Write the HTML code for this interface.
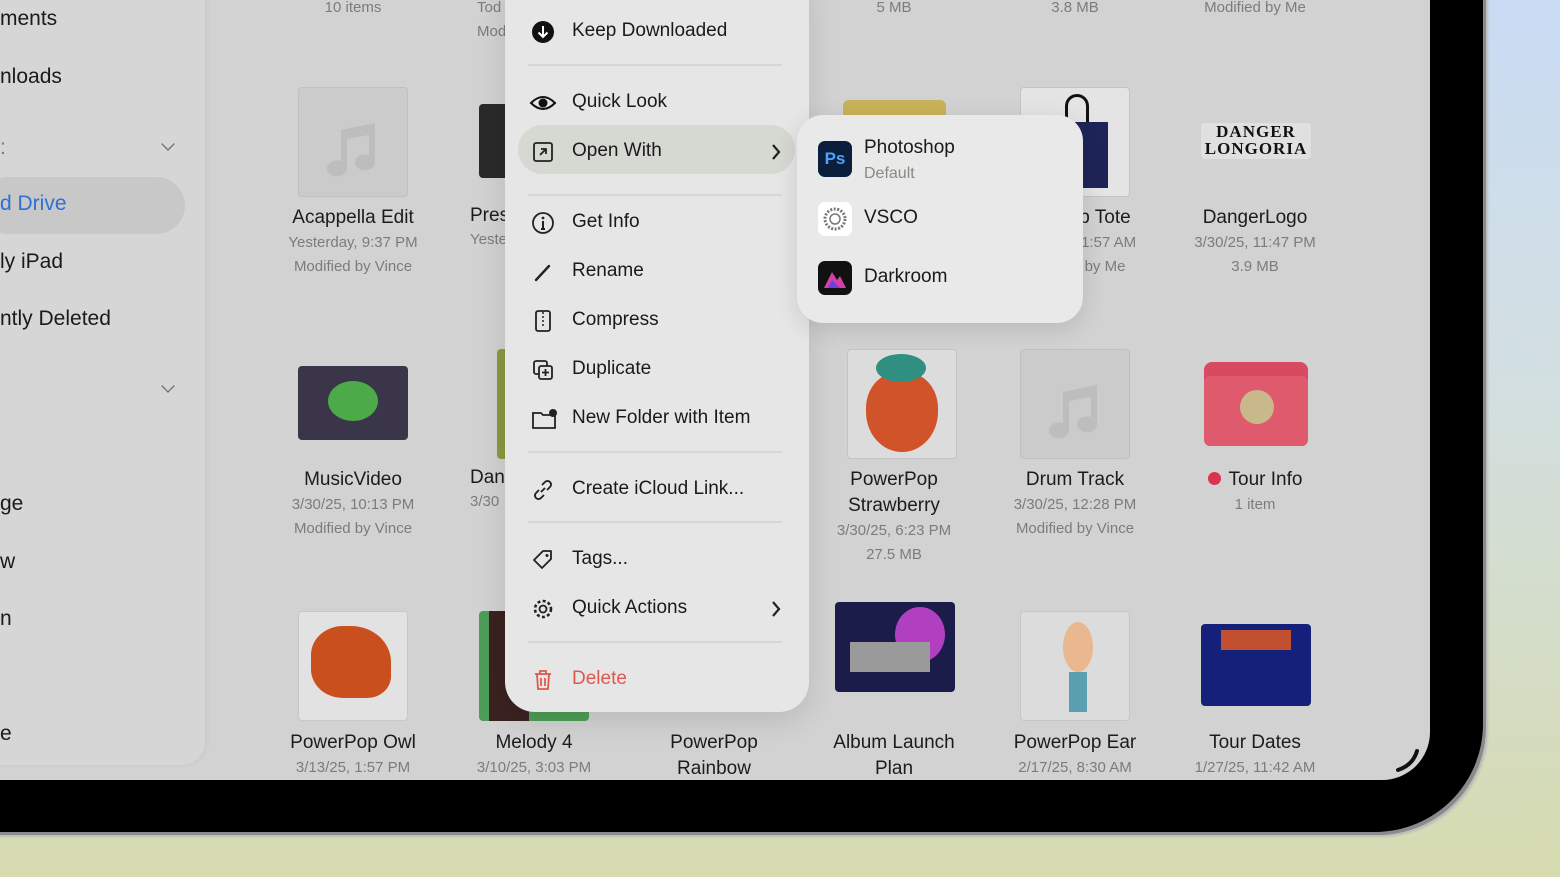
<!DOCTYPE html>
<html><head><meta charset="utf-8"><style>
*{margin:0;padding:0;box-sizing:border-box}
body{width:1560px;height:877px;overflow:hidden;position:relative;font-family:"Liberation Sans",sans-serif;background:linear-gradient(180deg,#c9dcf4 0%,#d3dfe0 45%,#d6dbb0 100%)}
.dev{position:absolute;left:-60px;top:-60px;width:1543px;height:892px;background:#000;border-radius:0 0 108px 0;box-shadow:3px 3px 0 #8a8a8a,5px 5px 2px #bbb}
.scr{position:absolute;left:0;top:0;width:1430px;height:780px;background:#d2d2d2;border-radius:0 0 48px 0;overflow:hidden}
.side{position:absolute;left:-20px;top:-20px;width:225px;height:785px;background:#d6d6d6;border-radius:0 0 24px 0;box-shadow:2px 0 6px rgba(0,0,0,.04)}
.st{position:absolute;left:0;font-size:21px;color:#1a1a1a;white-space:nowrap}
.chev{position:absolute;left:160px;width:16px;height:16px;border-right:2px solid #666;border-bottom:2px solid #666;transform:rotate(45deg) scale(.6)}
.th{position:absolute;width:110px;height:110px;border-radius:4px}
.nm{position:absolute;width:180px;text-align:center;font-size:19px;color:#1c1c1c;line-height:26px;margin-top:2px}
.mt{font-size:15px;color:#7c7c7c;line-height:24px}
.menu{position:absolute;left:505px;top:-33px;width:304px;height:742px;background:#e6e6e6;border-radius:30px;box-shadow:0 8px 30px rgba(0,0,0,.12)}
.mi{position:absolute;left:572px;font-size:19px;color:#1a1a1a;white-space:nowrap}
.ic{position:absolute;left:531px;width:24px;height:24px}
.sep{position:absolute;left:528px;width:254px;height:2px;background:#d7d7d7}
.sub{position:absolute;left:797px;top:112px;width:286px;height:208px;background:#e9e9e9;border-radius:26px;box-shadow:0 6px 24px rgba(0,0,0,.12)}
.note{fill:#bdbdbd}
.grp{position:absolute;left:0;top:3px;width:1430px;height:780px}
</style></head><body>
<div class="dev"></div>
<div class="scr">
 <div class="side"></div>
 <div class="st" style="top:7px">ments</div>
 <div class="st" style="top:65px">nloads</div>
 <div class="st" style="top:136px;color:#777">:</div>
 <div class="chev" style="top:136px"></div>
 <div style="position:absolute;left:-20px;top:177px;width:205px;height:57px;background:#c8c8c8;border-radius:29px"></div>
 <div class="st" style="top:192px;color:#2f6fd6">d Drive</div>
 <div class="st" style="top:250px">ly iPad</div>
 <div class="st" style="top:307px">ntly Deleted</div>
 <div class="chev" style="top:378px"></div>
 <div class="st" style="top:492px">ge</div>
 <div class="st" style="top:550px">w</div>
 <div class="st" style="top:607px">n</div>
 <div class="st" style="top:722px">e</div>

 <div class="nm mt" style="left:263px;top:-6px">10 items</div>
 <div class="nm mt" style="left:804px;top:-6px">5 MB</div>
 <div class="nm mt" style="left:985px;top:-6px">3.8 MB</div>
 <div class="nm mt" style="left:1165px;top:-6px">Modified by Me</div>
 <div class="mt" style="position:absolute;left:477px;top:-4px">Tod</div>
 <div class="mt" style="position:absolute;left:477px;top:20px">Mod</div>

 <div class="th" style="left:298px;top:87px;background:#cbcbcb;border:1px solid #c0c0c0"><svg width="110" height="110"><path class="note" d="M42 42 L76 35 V74 a10 8 0 1 1 -6 -7 V47 L48 51 V80 a10 8 0 1 1 -6 -7 Z"/></svg></div>
 <div class="nm" style="left:263px;top:203px">Acappella Edit<div class="mt">Yesterday, 9:37 PM<br>Modified by Vince</div></div>
 <div class="th" style="left:479px;top:104px;width:30px;height:74px;background:#2a2a2a"></div>
 <div style="position:absolute;left:470px;top:205px;font-size:19px;color:#1c1c1c">Pres<div class="mt" style="margin-top:1px">Yeste</div></div>
 <div class="th" style="left:843px;top:100px;width:103px;height:20px;background:#c9b257;border-radius:6px"></div>
 <div class="th" style="left:1020px;top:87px;background:#e4e4e4;border:1px solid #c4c4c4"><div style="position:absolute;left:44px;top:6px;width:24px;height:30px;border:3px solid #111;border-bottom:none;border-radius:12px 12px 0 0"></div><div style="position:absolute;left:35px;top:34px;width:52px;height:66px;background:#1f2458"></div></div>
 <div class="nm" style="left:985px;top:203px"><span style="margin-left:60px">p Tote</span><div class="mt" style="padding-left:60px">11:57 AM<br>by Me</div></div>
 <div class="th" style="left:1201px;top:123px;height:36px;background:#e0e0e0;font:bold 17px 'Liberation Serif',serif;color:#111;text-align:center;line-height:17px;letter-spacing:1px">DANGER<br>LONGORIA</div>
 <div class="nm" style="left:1165px;top:203px">DangerLogo<div class="mt">3/30/25, 11:47 PM<br>3.9 MB</div></div>

 <div class="th" style="left:298px;top:366px;height:74px;background:#3a3548"><div style="position:absolute;left:30px;top:15px;width:50px;height:40px;background:#4caa48;border-radius:50%"></div></div>
 <div class="nm" style="left:263px;top:465px">MusicVideo<div class="mt">3/30/25, 10:13 PM<br>Modified by Vince</div></div>
 <div class="th" style="left:497px;top:349px;width:12px;background:#8a9a40"></div>
 <div style="position:absolute;left:470px;top:467px;font-size:19px;color:#1c1c1c">Dan<div class="mt" style="margin-top:1px">3/30</div></div>
 <div class="th" style="left:847px;top:349px;background:#dcdcdc;border:1px solid #c4c4c4"><div style="position:absolute;left:18px;top:22px;width:72px;height:80px;background:#d0532a;border-radius:45% 45% 50% 50%"></div><div style="position:absolute;left:28px;top:4px;width:50px;height:28px;background:#2f8f80;border-radius:50%"></div></div>
 <div class="nm" style="left:804px;top:465px">PowerPop<br>Strawberry<div class="mt">3/30/25, 6:23 PM<br>27.5 MB</div></div>
 <div class="th" style="left:1020px;top:349px;background:#cbcbcb;border:1px solid #c0c0c0"><svg width="110" height="110"><path class="note" d="M42 42 L76 35 V74 a10 8 0 1 1 -6 -7 V47 L48 51 V80 a10 8 0 1 1 -6 -7 Z"/></svg></div>
 <div class="nm" style="left:985px;top:465px">Drum Track<div class="mt">3/30/25, 12:28 PM<br>Modified by Vince</div></div>
 <div class="th" style="left:1204px;top:362px;width:104px;height:84px;background:#d84a60;border-radius:8px"><div style="position:absolute;left:0;top:14px;width:104px;height:70px;background:#e05a6e;border-radius:6px"></div><div style="position:absolute;left:36px;top:28px;width:34px;height:34px;background:#c9b88a;border-radius:50%"></div></div>
 <div class="nm" style="left:1165px;top:465px"><span style="display:inline-block;width:13px;height:13px;border-radius:50%;background:#d8364e;margin-right:8px"></span>Tour Info<div class="mt">1 item</div></div>

 <div class="th" style="left:298px;top:611px;background:#e2e2e2;border:1px solid #c8c8c8"><div style="position:absolute;left:12px;top:14px;width:80px;height:72px;background:#c9501e;border-radius:40% 50% 30% 40%"></div></div>
 <div class="nm" style="left:263px;top:728px">PowerPop Owl<div class="mt">3/13/25, 1:57 PM</div></div>
 <div class="th" style="left:479px;top:611px;background:#4d9d58"><div style="position:absolute;left:10px;top:0;width:40px;height:110px;background:#3a2220"></div></div>
 <div class="nm" style="left:444px;top:728px">Melody 4<div class="mt">3/10/25, 3:03 PM</div></div>
 <div class="nm" style="left:624px;top:728px">PowerPop<br>Rainbow</div>
 <div class="th" style="left:835px;top:602px;width:120px;height:90px;background:#1c1c4a"><div style="position:absolute;left:60px;top:5px;width:50px;height:55px;background:#b040c0;border-radius:50%"></div><div style="position:absolute;left:15px;top:40px;width:80px;height:30px;background:#9a9a9a"></div></div>
 <div class="nm" style="left:804px;top:728px">Album Launch<br>Plan</div>
 <div class="th" style="left:1020px;top:611px;background:#dcdcdc;border:1px solid #c6c6c6"><div style="position:absolute;left:42px;top:10px;width:30px;height:50px;background:#e9b890;border-radius:50%"></div><div style="position:absolute;left:48px;top:60px;width:18px;height:40px;background:#5aa0b0"></div></div>
 <div class="nm" style="left:985px;top:728px">PowerPop Ear<div class="mt">2/17/25, 8:30 AM</div></div>
 <div class="th" style="left:1201px;top:624px;height:82px;background:#14207a"><div style="position:absolute;left:20px;top:6px;width:70px;height:20px;background:#c05030"></div></div>
 <div class="nm" style="left:1165px;top:728px">Tour Dates<div class="mt">1/27/25, 11:42 AM</div></div>
 <svg style="position:absolute;left:1395px;top:745px" width="30" height="30"><path d="M3 25 Q18 20 22 6" stroke="#111" stroke-width="4" fill="none" stroke-linecap="round"/></svg>

 <div class="grp">
 <div class="menu"></div>
 <div style="position:absolute;left:518px;top:122px;width:277px;height:49px;border-radius:25px;background:#d6d8d2"></div>
 <svg class="ic" style="top:17px"><circle cx="12" cy="12" r="11" fill="#111"/><path d="M12 6v11M7.5 12.5 12 17l4.5-4.5" stroke="#fff" stroke-width="2" fill="none"/></svg>
 <div class="mi" style="top:17px">Keep Downloaded</div>
 <div class="sep" style="top:61px"></div>
 <svg class="ic" style="top:88px;left:529px;width:28px"><path d="M2 12Q14 0 26 12Q14 24 2 12Z" stroke="#111" stroke-width="2" fill="none"/><circle cx="14" cy="12" r="4.5" fill="#111"/></svg>
 <div class="mi" style="top:88px">Quick Look</div>
 <svg class="ic" style="top:137px"><rect x="3" y="3" width="18" height="18" rx="2" stroke="#222" stroke-width="1.8" fill="none"/><path d="M9 15l6-6M10 9h5v5" stroke="#222" stroke-width="1.8" fill="none"/></svg>
 <div class="mi" style="top:137px">Open With</div>
 <svg style="position:absolute;left:770px;top:140px" width="12" height="18"><path d="M3 2l6 7-6 7" stroke="#222" stroke-width="2.2" fill="none"/></svg>
 <div class="sep" style="top:191px"></div>
 <svg class="ic" style="top:208px"><circle cx="12" cy="12" r="10" stroke="#222" stroke-width="1.8" fill="none"/><path d="M12 10v8M10 18h4" stroke="#222" stroke-width="2" fill="none"/><circle cx="12" cy="7" r="1.4" fill="#222"/></svg>
 <div class="mi" style="top:208px">Get Info</div>
 <svg class="ic" style="top:257px"><path d="M5 20L18 6" stroke="#222" stroke-width="2.4" fill="none" stroke-linecap="round"/></svg>
 <div class="mi" style="top:257px">Rename</div>
 <svg class="ic" style="top:306px"><rect x="5" y="2" width="14" height="20" rx="2" stroke="#222" stroke-width="1.8" fill="none"/><path d="M12 3v16" stroke="#222" stroke-width="1.5" stroke-dasharray="2 2"/></svg>
 <div class="mi" style="top:306px">Compress</div>
 <svg class="ic" style="top:355px"><rect x="3" y="3" width="13" height="13" rx="2" stroke="#222" stroke-width="1.8" fill="none"/><rect x="8" y="8" width="13" height="13" rx="2" stroke="#222" stroke-width="1.8" fill="#e6e6e6"/><path d="M14.5 11v7M11 14.5h7" stroke="#222" stroke-width="1.8"/></svg>
 <div class="mi" style="top:355px">Duplicate</div>
 <svg class="ic" style="top:404px;width:28px"><path d="M2 6h8l2 2h12v13H2Z" stroke="#222" stroke-width="1.8" fill="none"/><circle cx="22" cy="6" r="4" fill="#222"/></svg>
 <div class="mi" style="top:404px">New Folder with Item</div>
 <div class="sep" style="top:448px"></div>
 <svg class="ic" style="top:475px"><path d="M10 14l4-4M8 12l-3 3a3.5 3.5 0 0 0 5 5l3-3M16 12l3-3a3.5 3.5 0 0 0-5-5l-3 3" stroke="#222" stroke-width="1.9" fill="none"/></svg>
 <div class="mi" style="top:475px">Create iCloud Link...</div>
 <div class="sep" style="top:518px"></div>
 <svg class="ic" style="top:545px"><path d="M3 12L12 3h8v8l-9 9Z" stroke="#222" stroke-width="1.8" fill="none" stroke-linejoin="round"/><circle cx="16" cy="7.5" r="1.5" fill="#222"/></svg>
 <div class="mi" style="top:545px">Tags...</div>
 <svg class="ic" style="top:594px"><circle cx="12" cy="12" r="3.5" stroke="#222" stroke-width="1.8" fill="none"/><circle cx="12" cy="12" r="8" stroke="#222" stroke-width="2.6" fill="none" stroke-dasharray="3 2.3"/></svg>
 <div class="mi" style="top:594px">Quick Actions</div>
 <svg style="position:absolute;left:770px;top:597px" width="12" height="18"><path d="M3 2l6 7-6 7" stroke="#222" stroke-width="2.2" fill="none"/></svg>
 <div class="sep" style="top:638px"></div>
 <svg class="ic" style="top:665px"><path d="M4 6h16M9 6V3h6v3M6 6l1 15h10l1-15M10 10v8M14 10v8" stroke="#e0584c" stroke-width="1.8" fill="none"/></svg>
 <div class="mi" style="top:665px;color:#e0584c">Delete</div>

 <div class="sub"></div>
 <div style="position:absolute;left:818px;top:138px;width:34px;height:36px;background:#0b1f3d;border-radius:7px;color:#4aa3ff;font:bold 17px 'Liberation Sans',sans-serif;text-align:center;line-height:36px">Ps</div>
 <div class="mi" style="left:864px;top:134px">Photoshop</div>
 <div class="mt" style="position:absolute;left:864px;top:159px;font-size:16px;color:#8a8a80">Default</div>
 <div style="position:absolute;left:818px;top:199px;width:34px;height:34px;background:#fff;border-radius:7px"><svg width="34" height="34"><circle cx="17" cy="17" r="10" stroke="#777" stroke-width="3" fill="none" stroke-dasharray="2 1.5"/><circle cx="17" cy="17" r="5" stroke="#777" stroke-width="1.5" fill="none"/></svg></div>
 <div class="mi" style="left:864px;top:204px">VSCO</div>
 <div style="position:absolute;left:818px;top:258px;width:34px;height:34px;background:#111;border-radius:7px"><svg width="34" height="34"><path d="M6 27L14 11l5 8 3-4 6 12Z" fill="#d33fa6"/><path d="M10 27l4-8 8 8Z" fill="#6a44d8"/></svg></div>
 <div class="mi" style="left:864px;top:263px">Darkroom</div>
 </div>
</div>
</body></html>
